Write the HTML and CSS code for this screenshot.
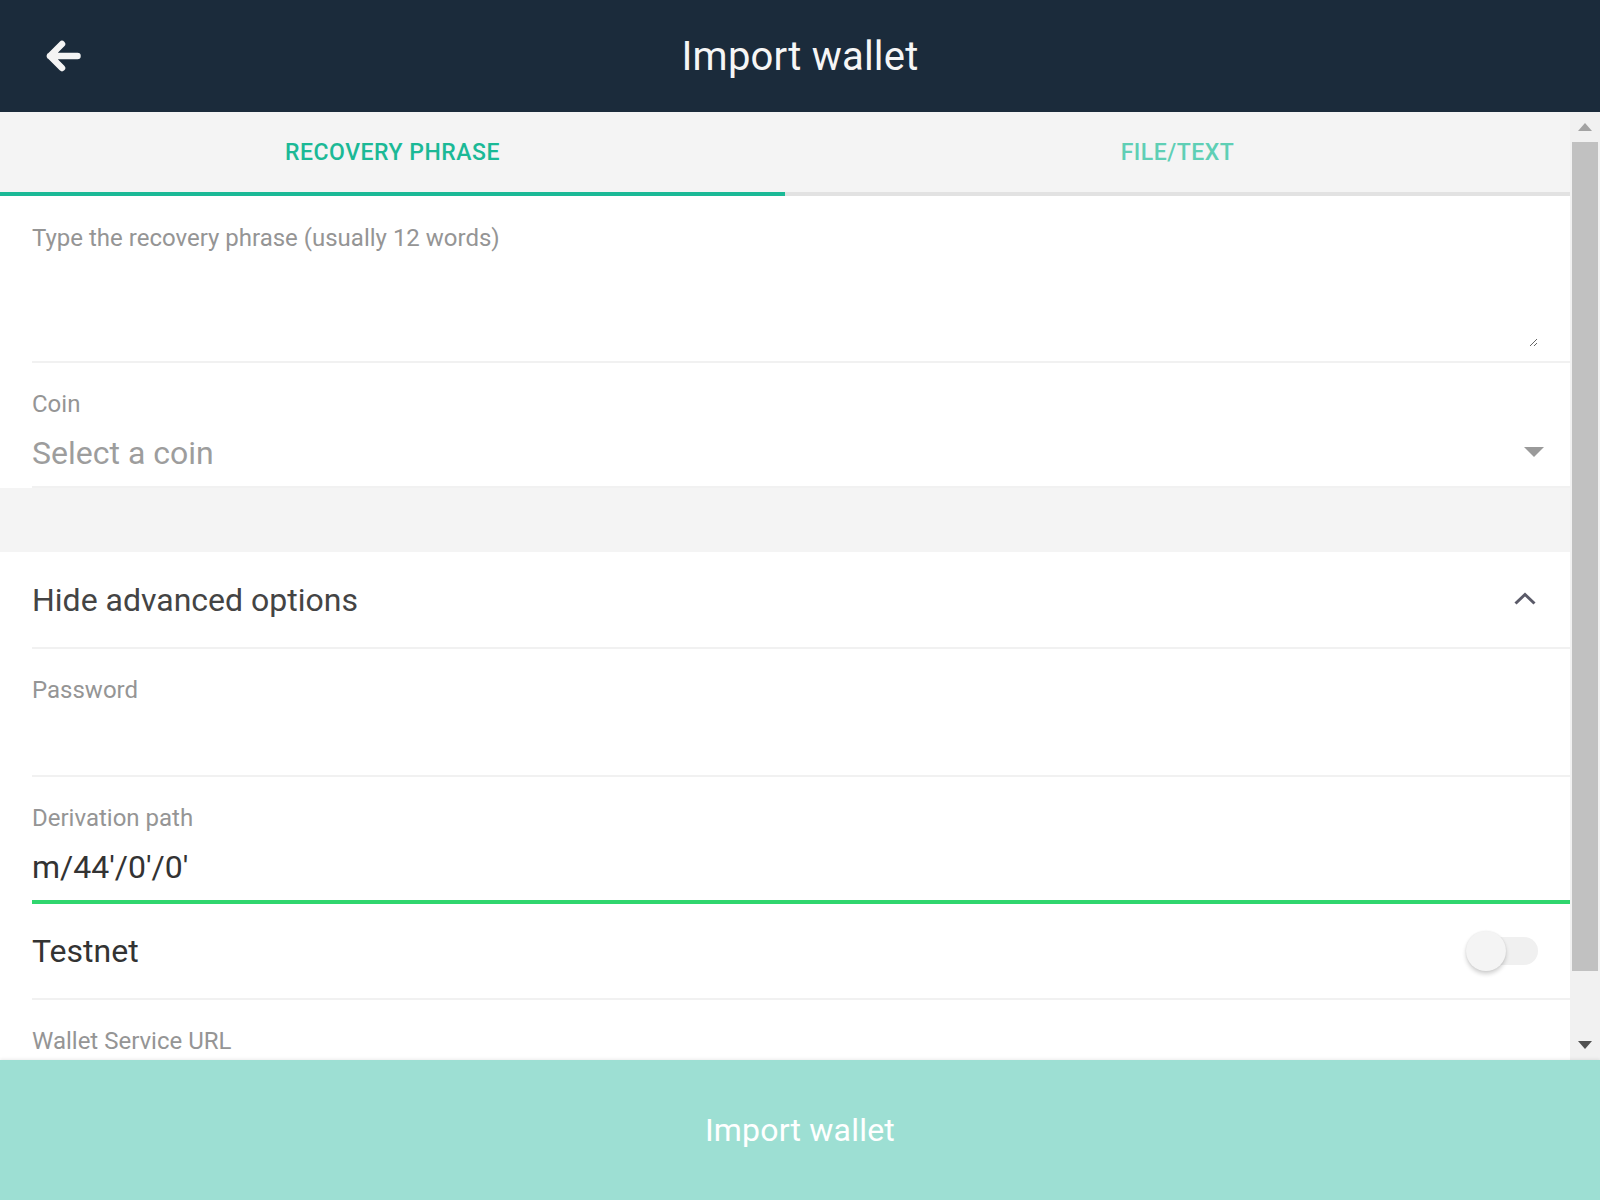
FILE: index.html
```html
<!DOCTYPE html>
<html lang="en">
<head>
<meta charset="utf-8">
<title>Import wallet</title>
<link rel="stylesheet" href="styles.css">
</head>
<body>
<div class="app">
  <header class="topbar">
    <div class="topbar-left">
      <svg class="back-icon" width="40" height="40" viewBox="0 0 40 40">
        <path d="M6 20 H33.5 M18 8 L6 20 L18 32" fill="none" stroke="#f4f4f4" stroke-width="6.5" stroke-linecap="round" stroke-linejoin="round"/>
      </svg>
    </div>
    <h1 class="topbar-title">Import wallet</h1>
    <div class="topbar-right"></div>
  </header>

  <div class="main">
    <div class="content">
      <nav class="tabs">
        <div class="tab tab-active">RECOVERY PHRASE</div>
        <div class="tab tab-inactive">FILE/TEXT</div>
      </nav>

      <div class="field field-textarea">
        <textarea class="phrase" placeholder="Type the recovery phrase (usually 12 words)"></textarea>
      </div>

      <div class="field field-select">
        <div class="label">Coin</div>
        <div class="select-row">
          <span class="value placeholder-value">Select a coin</span>
          <svg class="caret" width="20" height="10" viewBox="0 0 20 10"><path d="M0 0 H20 L10 10 Z" fill="#9a9a9a"/></svg>
        </div>
      </div>

      <div class="spacer-band"></div>

      <div class="row row-advanced">
        <span class="row-text">Hide advanced options</span>
        <svg class="chevron" width="24" height="24" viewBox="0 0 24 24"><path d="M2.5 15.5 L12 6.5 L21.5 15.5" fill="none" stroke="#5a5a68" stroke-width="3"/></svg>
      </div>

      <div class="field field-input field-password">
        <div class="label">Password</div>
        <div class="value"></div>
      </div>

      <div class="field field-input field-focused">
        <div class="label">Derivation path</div>
        <div class="value dark-value">m/44'/0'/0'</div>
      </div>

      <div class="row row-toggle">
        <span class="row-text dark">Testnet</span>
        <div class="toggle">
          <div class="toggle-track"></div>
          <div class="toggle-thumb"></div>
        </div>
      </div>

      <div class="field field-input">
        <div class="label">Wallet Service URL</div>
        <div class="value"></div>
      </div>
    </div>

    <div class="scrollbar">
      <div class="sb-btn"><span class="sb-up"></span></div>
      <div class="sb-track"><div class="sb-thumb"></div></div>
      <div class="sb-btn"><span class="sb-down"></span></div>
    </div>
  </div>

  <footer class="action">
    <span class="action-text">Import wallet</span>
  </footer>
</div>
</body>
</html>
```

FILE: styles.css
```css
* { box-sizing: border-box; }

html, body {
  margin: 0;
  padding: 0;
  height: 1200px;
  overflow: hidden;
  background: #ffffff;
  font-family: Roboto, "Noto Sans", "Liberation Sans", sans-serif;
}

.app {
  display: flex;
  flex-direction: column;
  height: 1200px;
}

/* Header */
.topbar {
  height: 112px;
  flex: 0 0 112px;
  background: #1b2b3b;
  display: grid;
  grid-template-columns: 1fr auto 1fr;
  align-items: center;
}
.topbar-left {
  display: flex;
  align-items: center;
  padding-left: 44px;
}
.back-icon { display: block; }
.topbar-title {
  margin: 0;
  color: #f6f6f6;
  font-size: 40px;
  font-weight: 400;
  letter-spacing: 0.2px;
}

/* Main scroll area */
.main {
  flex: 1 1 auto;
  display: flex;
  overflow: hidden;
  min-height: 0;
}
.content {
  flex: 1 1 auto;
  overflow: hidden;
  background: #ffffff;
}

/* Tabs */
.tabs {
  display: flex;
  background: #f4f4f4;
  height: 84px;
}
.tab {
  flex: 1 1 0;
  display: flex;
  align-items: center;
  justify-content: center;
  font-size: 23px;
  font-weight: 500;
  letter-spacing: 0.5px;
  border-bottom: 4px solid #e2e2e2;
}
.tab-active {
  color: #1bb996;
  border-bottom-color: #1bb996;
}
.tab-inactive {
  color: #5fcfb5;
}

/* Fields */
.field {
  margin-left: 32px;
  border-bottom: 2px solid #f1f1f1;
}
.label {
  font-size: 24px;
  line-height: 28px;
  color: #959595;
  padding-top: 27px;
}
.value {
  font-size: 32px;
  line-height: 40px;
  height: 40px;
  margin-top: 15px;
  color: #9d9d9d;
}
.dark-value { color: #333333; }

.field-textarea {
  height: 167px;
  padding-top: 28px;
  padding-right: 32px;
}
.phrase {
  display: block;
  width: 100%;
  height: 123px;
  border: none;
  outline: none;
  padding: 0;
  margin: 0;
  resize: vertical;
  font-family: Roboto, "Noto Sans", "Liberation Sans", sans-serif;
  font-size: 24px;
  line-height: 28px;
  color: #333;
  background: transparent;
}
.phrase::placeholder { color: #959595; }

.field-select {
  padding-bottom: 13px;
}
.select-row {
  display: flex;
  align-items: center;
  justify-content: space-between;
  padding-right: 26px;
}
.select-row .value { color: #9d9d9d; }
.caret { display: block; margin-top: 12px; }

.spacer-band {
  height: 64px;
  background: #f4f4f4;
}

.field-input {
  padding-bottom: 13px;
}
.field-password {
  padding-bottom: 16px;
}
.field-focused {
  border-bottom: 4px solid #30d66e;
}

/* Rows */
.row {
  margin-left: 32px;
  display: flex;
  align-items: center;
  justify-content: space-between;
  border-bottom: 2px solid #f1f1f1;
  padding-right: 32px;
}
.row-advanced {
  height: 97px;
  padding-right: 33px;
}
.row-toggle {
  height: 96px;
}
.row-text {
  font-size: 32px;
  color: #444444;
}
.row-text.dark { color: #333333; }
.chevron { display: block; }

/* Toggle */
.toggle {
  position: relative;
  width: 72px;
  height: 40px;
  display: flex;
  align-items: center;
  justify-content: flex-end;
}
.toggle-track {
  width: 70px;
  height: 28px;
  border-radius: 14px;
  background: #f0f0f0;
}
.toggle-thumb {
  position: absolute;
  left: 0;
  top: 0;
  width: 40px;
  height: 40px;
  border-radius: 50%;
  background: #f4f4f4;
  box-shadow: 0 3px 4px rgba(0, 0, 0, 0.18), 0 0 2px rgba(0, 0, 0, 0.08);
}

/* Scrollbar */
.scrollbar {
  flex: 0 0 30px;
  width: 30px;
  background: #f1f1f1;
  display: flex;
  flex-direction: column;
}
.sb-btn {
  height: 30px;
  flex: 0 0 30px;
  display: flex;
  align-items: center;
  justify-content: center;
}
.sb-up {
  width: 0;
  height: 0;
  border-left: 7px solid transparent;
  border-right: 7px solid transparent;
  border-bottom: 8px solid #a3a3a3;
}
.sb-down {
  width: 0;
  height: 0;
  border-left: 7px solid transparent;
  border-right: 7px solid transparent;
  border-top: 8px solid #505050;
}
.sb-track {
  flex: 1 1 auto;
  padding: 0 2px;
}
.sb-thumb {
  height: 829px;
  background: #c1c1c1;
}

/* Footer action */
.action {
  flex: 0 0 140px;
  height: 140px;
  background: #9ddfd3;
  display: flex;
  align-items: center;
  justify-content: center;
  box-shadow: 0 -1px 3px rgba(0, 0, 0, 0.08);
  position: relative;
}
.action-text {
  color: #ffffff;
  font-size: 32px;
  font-weight: 400;
  letter-spacing: 0.2px;
}
```
